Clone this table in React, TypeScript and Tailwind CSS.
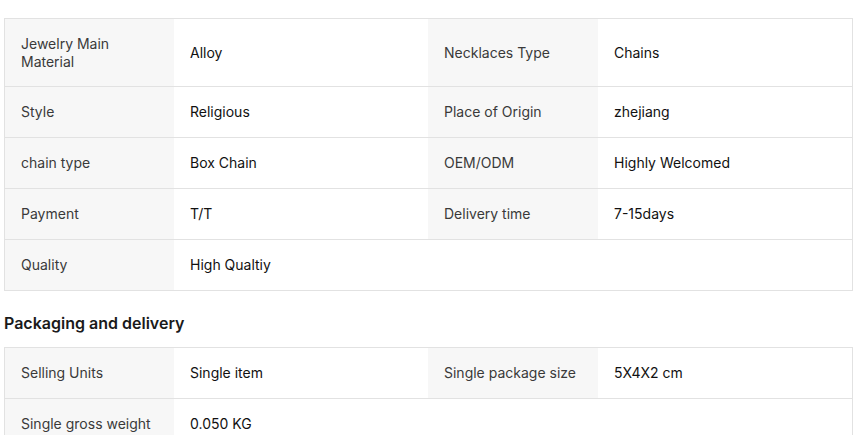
import React from "react";

type Row = [string, string, string?, string?];

const spec: Row[] = [
  ["Jewelry Main Material", "Alloy", "Necklaces Type", "Chains"],
  ["Style", "Religious", "Place of Origin", "zhejiang"],
  ["chain type", "Box Chain", "OEM/ODM", "Highly Welcomed"],
  ["Payment", "T/T", "Delivery time", "7-15days"],
  ["Quality", "High Qualtiy"],
];

const pack: Row[] = [
  ["Selling Units", "Single item", "Single package size", "5X4X2 cm"],
  ["Single gross weight", "0.050 KG"],
];

function Table({ rows, firstTall }: { rows: Row[]; firstTall?: boolean }) {
  return (
    <div className="ml-[4px] w-[849px] border border-[#e2e2e2]">
      {rows.map((r, i) => {
        const h = firstTall && i === 0 ? "h-[67px]" : "h-[50px]";
        return (
          <div
            key={i}
            className={`grid grid-cols-[169px_254px_170px_1fr] ${i > 0 ? "border-t border-[#e2e2e2]" : ""}`}
          >
            <div className={`${h} bg-[#f7f7f7] px-4 text-[14px] leading-[18px] text-[#3a3a3a] flex items-center`}>
              {r[0]}
            </div>
            <div className={`${h} px-4 text-[14px] leading-[18px] font-normal text-[#111] flex items-center`}>
              {r[1]}
            </div>
            {r[2] !== undefined ? (
              <div className={`${h} bg-[#f7f7f7] px-4 text-[14px] leading-[18px] text-[#3a3a3a] flex items-center`}>
                {r[2]}
              </div>
            ) : (
              <div className={h} />
            )}
            {r[3] !== undefined ? (
              <div className={`${h} px-4 text-[14px] leading-[18px] font-normal text-[#111] flex items-center`}>
                {r[3]}
              </div>
            ) : (
              <div className={h} />
            )}
          </div>
        );
      })}
    </div>
  );
}

export default function App() {
  return (
    <div
      className="w-[857px] h-[435px] overflow-hidden bg-white pt-[18px]"
      style={{ fontFamily: "Inter, 'Noto Sans', sans-serif" }}
    >
      <Table rows={spec} firstTall />
      <h2 className="ml-[4px] mt-[20px] mb-[12px] text-[16px] leading-[24px] font-semibold text-[#1a1a1a]">
        Packaging and delivery
      </h2>
      <Table rows={pack} />
    </div>
  );
}
